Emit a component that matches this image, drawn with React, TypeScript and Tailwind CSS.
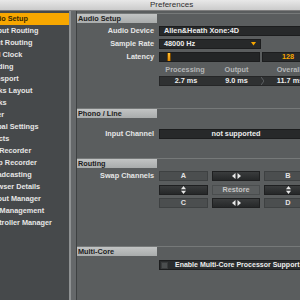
import React from "react";

const font = { fontFamily: '"Liberation Sans", Arial, sans-serif' };

const sideItems = [
  "Audio Setup",
  "Output Routing",
  "Input Routing",
  "MIDI Clock",
  "Loading",
  "Transport",
  "Decks Layout",
  "Decks",
  "Mixer",
  "Global Settings",
  "Effects",
  "Mix Recorder",
  "Loop Recorder",
  "Broadcasting",
  "Browser Details",
  "Layout Manager",
  "File Management",
  "Controller Manager",
];

function Header({ title }: { title: string }) {
  return (
    <div className="flex h-[10px] border-t border-[#767979]">
      <div className="w-[80px] bg-gradient-to-b from-[#c2c4c4] to-[#a9acac] pl-[1px] text-[7.3px] font-bold leading-[9px] text-[#1c1c1c]">
        {title}
      </div>
      <div className="flex-1" />
    </div>
  );
}

function Label({ children }: { children: React.ReactNode }) {
  return (
    <div className="w-[82px] shrink-0 pr-[5px] text-right text-[7.3px] font-bold leading-[10px] text-[#e6e6e6]">
      {children}
    </div>
  );
}

function LR() {
  return (
    <svg width="9" height="6" viewBox="0 0 9 6">
      <polygon points="0,3 3.5,0 3.5,6" fill="#e8e8e8" />
      <polygon points="9,3 5.5,0 5.5,6" fill="#e8e8e8" />
    </svg>
  );
}

function UD() {
  return (
    <svg width="5" height="8" viewBox="0 0 5 8">
      <polygon points="2.5,0 5,3.3 0,3.3" fill="#e8e8e8" />
      <polygon points="2.5,8 5,4.7 0,4.7" fill="#e8e8e8" />
    </svg>
  );
}

function Btn({
  children,
  kind,
  w,
}: {
  children: React.ReactNode;
  kind: "mid" | "dark" | "flat";
  w: string;
}) {
  const cls =
    kind === "dark"
      ? "bg-gradient-to-b from-[#3a3c3d] to-[#262829] border border-[#1f2021] text-[#e8e8e8]"
      : kind === "mid"
      ? "bg-[#4b4e4f] border border-[#3e4142] text-[#e2e2e2]"
      : "bg-[#5a5d5e] border border-[#4a4d4e] text-[#c4c4c4]";
  return (
    <div
      className={`${w} h-[10px] shrink-0 flex items-center justify-center text-[7.3px] font-bold leading-[8px] ${cls}`}
    >
      {children}
    </div>
  );
}

export default function App() {
  return (
    <div className="w-[300px] h-[300px] overflow-hidden flex flex-col bg-[#5e6162]" style={font}>
      {/* title bar */}
      <div className="h-[11px] shrink-0 bg-gradient-to-b from-[#e8e8e8] to-[#cbcbcb] border-b border-[#7d7d7d] pl-[150px] text-[8px] leading-[10px] text-[#2e2e2e]">
        Preferences
      </div>
      <div className="flex flex-1 min-h-0">
        {/* sidebar */}
        <div className="w-[69px] shrink-0 bg-[#46494b] pt-[2px] overflow-hidden">
          {sideItems.map((t, i) => (
            <div
              key={t}
              className={`h-[12px] whitespace-nowrap text-[7.3px] font-bold leading-[12px] indent-[-15px] ${
                i === 0 ? "bg-[#f7a700] text-[#3a2800]" : "text-[#e6e6e6]"
              }`}
            >
              {t}
            </div>
          ))}
        </div>
        <div className="w-[2px] shrink-0 bg-[#8f9293]" />
        <div className="w-[5px] shrink-0 bg-[#65686a]" />
        <div className="w-[1px] shrink-0 bg-[#3e4142]" />
        {/* content */}
        <div className="flex-1 min-w-0 overflow-hidden bg-[#5a5d5e] pt-[2px] flex flex-col">
          <Header title="Audio Setup" />
          <div className="mt-[3px] flex h-[10px] items-center">
            <Label>Audio Device</Label>
            <div className="w-[160px] shrink-0 h-[10px] bg-[#27292a] border border-[#1c1d1e] pl-[4px] text-[7.3px] font-bold leading-[8px] text-[#ececec] whitespace-nowrap">
              Allen&amp;Heath Xone:4D
            </div>
          </div>
          <div className="mt-[3px] flex h-[10px] items-center">
            <Label>Sample Rate</Label>
            <div className="w-[102px] shrink-0 h-[10px] bg-[#27292a] border border-[#1c1d1e] pl-[4px] pr-[4px] flex items-center justify-between text-[7.3px] font-bold leading-[8px] text-[#ececec]">
              <span>48000 Hz</span>
              <svg width="5" height="4" viewBox="0 0 5 4">
                <polygon points="0,0 5,0 2.5,3.5" fill="#f7a700" />
              </svg>
            </div>
          </div>
          <div className="mt-[3px] flex h-[10px] items-center">
            <Label>Latency</Label>
            <div className="w-[101px] shrink-0 h-[10px] bg-[#232526] border border-[#1c1d1e] flex items-center pl-[7px]">
              <div className="w-[4px] h-[8px] bg-gradient-to-b from-[#ffc133] to-[#e08a00] border-x border-[#7a4a00]" />
            </div>
            <div className="ml-[2px] w-[50px] shrink-0 h-[10px] bg-[#27292a] border border-[#1c1d1e] pl-[19px] text-[7.3px] font-bold leading-[8px] text-[#f7a700]">
              128
            </div>
          </div>
          <div className="mt-[3px] flex h-[9px] items-center text-[7.3px] font-bold leading-[9px] text-[#b4b6b7]">
            <div className="w-[82px] shrink-0" />
            <div className="w-[52px] shrink-0 text-center">Processing</div>
            <div className="w-[51px] shrink-0 text-center">Output</div>
            <div className="w-[54px] shrink-0 text-center">Overall</div>
          </div>
          <div className="mt-[2px] flex h-[10px] items-center">
            <div className="w-[82px] shrink-0" />
            <div className="w-[160px] shrink-0 h-[10px] bg-[#2f3132] border border-[#252627] flex items-center text-[7.3px] font-bold leading-[8px] text-[#ececec]">
              <div className="w-[52px] text-center">2.7 ms</div>
              <div className="w-[49px] text-center">9.0 ms</div>
              <svg width="3" height="8" viewBox="0 0 3 8" className="shrink-0">
                <polyline points="0,0 3,4 0,8" fill="none" stroke="#6a6d6e" strokeWidth="0.8" />
              </svg>
              <div className="w-[52px] text-center">11.7 ms</div>
            </div>
          </div>

          <div className="mt-[22px]">
            <Header title="Phono / Line" />
          </div>
          <div className="mt-[11px] flex h-[10px] items-center">
            <Label>Input Channel</Label>
            <div className="w-[154px] shrink-0 h-[10px] bg-[#27292a] border border-[#1c1d1e] text-center text-[7.3px] font-bold leading-[8px] text-[#ececec]">
              not supported
            </div>
          </div>

          <div className="mt-[19px]">
            <Header title="Routing" />
          </div>
          <div className="mt-[3px] flex h-[10px] items-center">
            <Label>Swap Channels</Label>
            <div className="flex gap-[4px]">
              <Btn kind="mid" w="w-[49px]">A</Btn>
              <Btn kind="dark" w="w-[48px]"><LR /></Btn>
              <Btn kind="mid" w="w-[48px]">B</Btn>
            </div>
          </div>
          <div className="mt-[4px] flex h-[10px] items-center">
            <div className="w-[82px] shrink-0" />
            <div className="flex gap-[4px]">
              <Btn kind="dark" w="w-[49px]"><UD /></Btn>
              <Btn kind="flat" w="w-[48px]">Restore</Btn>
              <Btn kind="dark" w="w-[48px]"><UD /></Btn>
            </div>
          </div>
          <div className="mt-[3px] flex h-[10px] items-center">
            <div className="w-[82px] shrink-0" />
            <div className="flex gap-[4px]">
              <Btn kind="mid" w="w-[49px]">C</Btn>
              <Btn kind="dark" w="w-[48px]"><LR /></Btn>
              <Btn kind="mid" w="w-[48px]">D</Btn>
            </div>
          </div>

          <div className="mt-[38px]">
            <Header title="Multi-Core" />
          </div>
          <div className="mt-[4px] flex h-[10px] items-center">
            <div className="w-[82px] shrink-0" />
            <div className="w-[160px] shrink-0 h-[10px] bg-[#2a2c2d] border border-[#1c1d1e] flex items-center gap-[7px] pl-[1px] text-[7px] font-bold leading-[8px] text-[#ececec] whitespace-nowrap">
              <div className="w-[7px] h-[7px] bg-[#4b4e4f] border border-[#3a3c3d]" />
              <span>Enable Multi-Core Processor Support</span>
            </div>
          </div>
        </div>
      </div>
    </div>
  );
}
